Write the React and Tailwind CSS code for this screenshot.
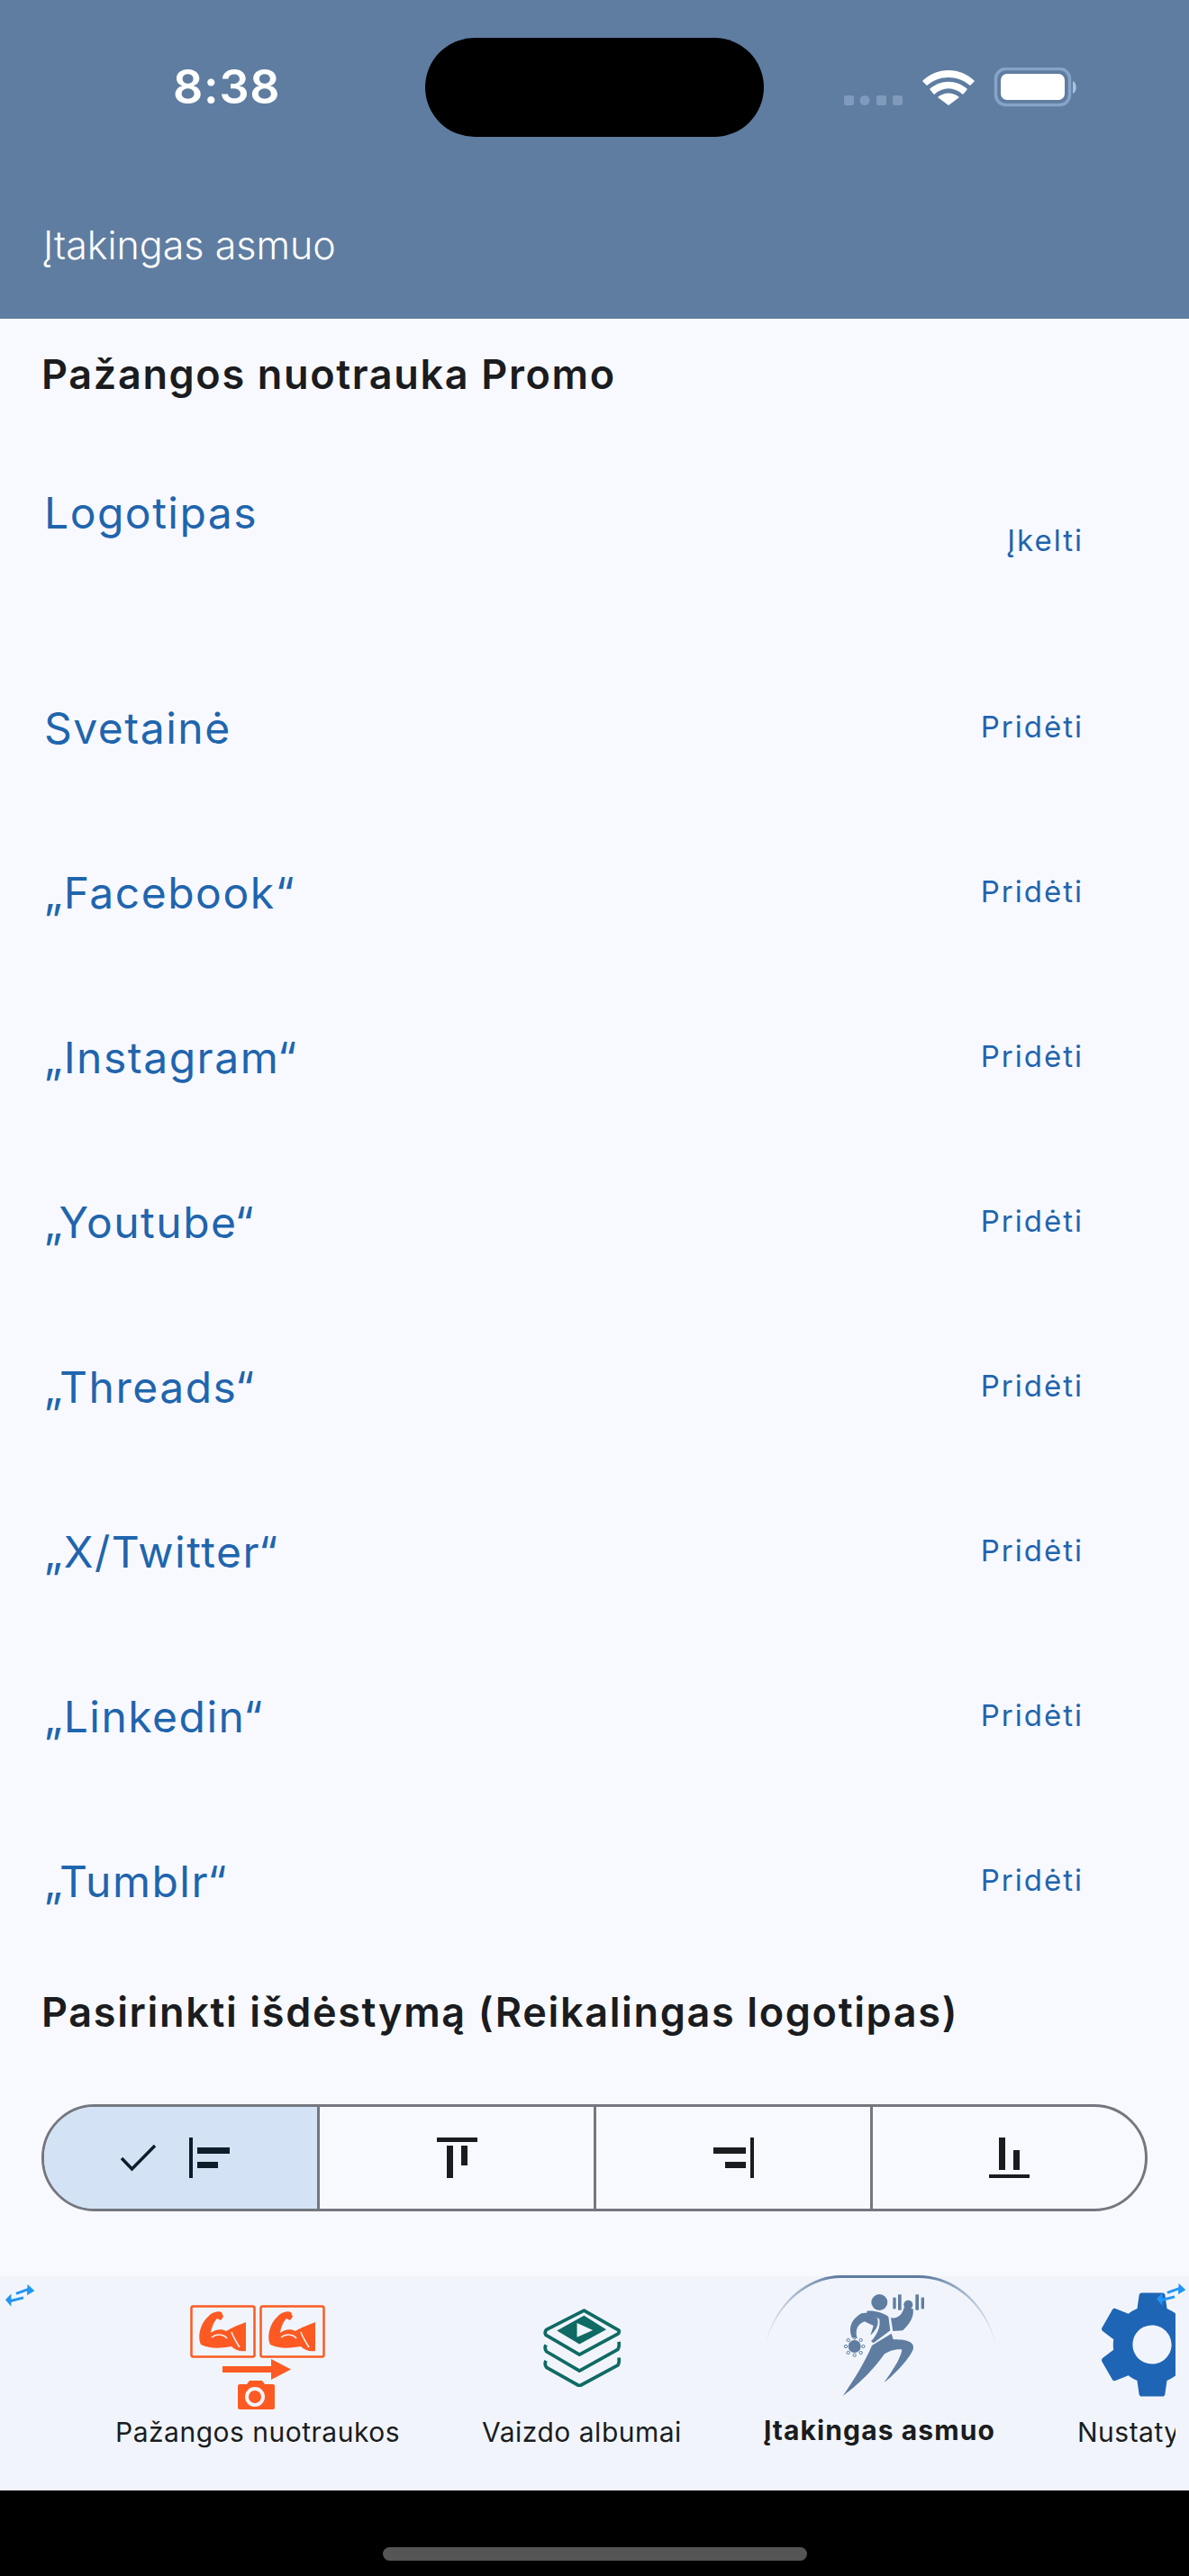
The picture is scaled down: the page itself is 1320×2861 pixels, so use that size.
const links = ["Svetainė", "„Facebook“", "„Instagram“", "„Youtube“", "„Threads“", "„X/Twitter“", "„Linkedin“", "„Tumblr“"];

function StatusIcons() {
  return (
    <svg width="262" height="44" viewBox="0 0 262 44" className="block">
      <g fill="#7f9abb">
        <rect x="0" y="31" width="11" height="11" rx="2" />
        <circle cx="23" cy="36.5" r="5.5" />
        <rect x="36" y="31" width="11" height="11" rx="2" />
        <rect x="54" y="31" width="11" height="11" rx="3" />
      </g>
      <path d="M87 15 C103 -1 129 -1 145 15 L140 20 C126 8 106 8 92 20 Z" fill="#fff" />
      <path d="M95 24 C107 13 125 13 137 24 L132 30 C122 21 110 21 100 30 Z" fill="#fff" />
      <path d="M104 33 C111 27 121 27 128 33 L116 42 Z" fill="#fff" />
      <rect x="168.5" y="1.5" width="82" height="40" rx="11" fill="none" stroke="#86a3c8" strokeWidth="3.5" />
      <rect x="174" y="7" width="71" height="29" rx="7" fill="#fff" />
      <path d="M254 15 C259 17 259 27 254 29 Z" fill="#a9c1de" />
    </svg>
  );
}

function Swap() {
  return (
    <svg width="34" height="26" viewBox="15 105 105 80" className="block">
      <path d="M55 140 L100 124" stroke="#2196f3" strokeWidth="9" fill="none" />
      <path d="M94 108 L118 130 L92 146 Z" fill="#2196f3" />
      <path d="M80 154 L36 165" stroke="#2196f3" strokeWidth="9" fill="none" />
      <path d="M38 140 L18 161 L38 184 Z" fill="#2196f3" />
    </svg>
  );
}

function Flex({ x }) {
  return (
    <g transform={`translate(${x} 0)`}>
      <rect x="1.5" y="1.5" width="70" height="56" rx="2" fill="none" stroke="#fc5a22" strokeWidth="2.5" />
      <path d="M12 44 C8 36 11 21 20 13 C24 8 31 6 35 8 L37 13 L34 17 L30 15 C27 18 24 24 23 31 C28 27 35 26 40 29 C46 25 55 22 62 19 L62 51 C55 52 50 50 46 46 C38 47 24 50 12 44 Z" fill="#fc5a22" />
      <path d="M24 36 C30 31 38 33 41 37 M46 30 C48 36 52 42 55 47" stroke="#f1f5fb" strokeWidth="1.5" fill="none" />
    </g>
  );
}

function ProgressIcon() {
  return (
    <svg width="150" height="118" viewBox="0 0 150 118" className="block">
      <Flex x={0} />
      <Flex x={77} />
      <rect x="36" y="68" width="56" height="7" fill="#fc5a22" />
      <path d="M90 60 L112 71.5 L90 83 Z" fill="#fc5a22" />
      <path d="M53 90 Q53 88 55 88 H63 L66 84 H80 L83 88 H92 Q94 88 94 90 V114 Q94 116 92 116 H55 Q53 116 53 114 Z" fill="#fc5a22" />
      <circle cx="72" cy="102" r="9" fill="#fc5a22" stroke="#f1f5fb" strokeWidth="4" />
    </svg>
  );
}

function AlbumIcon() {
  return (
    <svg width="88" height="88" viewBox="310 188 260 260" className="block">
      <g fill="none" stroke="#0f6a64" strokeWidth="11" strokeLinejoin="round">
        <path d="M447 197 L561 262 Q564 268 558 274 L432 342 L322 278 Q316 268 324 260 Z" />
        <path d="M322 310 Q316 322 324 332 L432 395 L558 325 Q564 315 561 300" />
        <path d="M322 362 Q316 374 324 384 L432 445 L558 377 Q564 367 561 352" />
      </g>
      <path d="M447 214 L520 260 L432 308 L358 263 Z" fill="#0f6a64" />
      <path d="M424 238 L476 262 L424 285 Z" fill="#f1f5fb" />
    </svg>
  );
}

function RunnerIcon() {
  return (
    <svg width="257" height="135" viewBox="85 75 771 405" className="block">
      <defs>
        <linearGradient id="arc" x1="0" x2="1" y1="0" y2="0">
          <stop offset="0" stopColor="#5f7da1" stopOpacity="0.1" />
          <stop offset="0.3" stopColor="#5f7da1" />
          <stop offset="0.7" stopColor="#5f7da1" />
          <stop offset="1" stopColor="#5f7da1" stopOpacity="0.1" />
        </linearGradient>
      </defs>
      <path d="M88 318 C120 160 240 78 340 78 H600 C720 78 830 170 860 318 C825 180 720 87 600 87 H340 C240 87 125 170 88 318 Z" fill="url(#arc)" />
      <g fill="#5f7da1">
        <circle cx="470" cy="168" r="27" />
        <rect x="515" y="152" width="10" height="38" />
        <rect x="532" y="142" width="11" height="52" />
        <rect x="590" y="142" width="11" height="52" />
        <rect x="609" y="152" width="10" height="38" />
        <circle cx="566" cy="176" r="15" />
        <path d="M552 185 L582 190 C586 218 570 240 548 262 L515 264 L508 220 C525 222 545 215 552 185 Z" />
        <path d="M428 197 C455 195 482 203 500 216 L506 262 L450 304 L442 298 C462 276 474 252 470 224 C455 214 442 208 428 212 Z" />
        <path d="M410 205 C380 222 364 250 378 285 L396 288 C388 262 396 242 420 232 L450 246 L440 278 C462 258 470 238 462 218 C445 206 428 200 410 205 Z" />
        <circle cx="387" cy="315" r="21" />
        <path d="M445 312 L510 272 L516 292 C550 292 586 295 583 322 C574 352 520 410 485 436 C510 400 540 358 545 326 C530 322 500 330 485 342 C452 392 390 450 348 480 C382 430 420 372 445 312 Z" />
      </g>
      <g fill="none" stroke="#5f7da1" strokeWidth="3">
        <circle cx="387" cy="286" r="5" />
        <circle cx="387" cy="344" r="5" />
        <circle cx="358" cy="315" r="5" />
        <circle cx="416" cy="315" r="5" />
        <circle cx="366" cy="294" r="5" />
        <circle cx="408" cy="294" r="5" />
        <circle cx="366" cy="336" r="5" />
        <circle cx="408" cy="336" r="5" />
      </g>
    </svg>
  );
}

function GearIcon() {
  return (
    <svg width="144" height="144" viewBox="0 0 24 24" className="block" fill="#1f65b5">
      <path d="M19.14 12.94c.04-.3.06-.61.06-.94 0-.32-.02-.64-.07-.94l2.03-1.58c.18-.14.23-.41.12-.61l-1.92-3.32c-.12-.22-.37-.29-.59-.22l-2.39.96c-.5-.38-1.03-.7-1.62-.94l-.36-2.54c-.04-.24-.24-.41-.48-.41h-3.84c-.24 0-.43.17-.47.41l-.36 2.54c-.59.24-1.13.57-1.62.94l-2.39-.96c-.22-.08-.47 0-.59.22L2.74 8.87c-.12.21-.08.47.12.61l2.03 1.58c-.05.3-.09.63-.09.94s.02.64.07.94l-2.03 1.58c-.18.14-.23.41-.12.61l1.92 3.32c.12.22.37.29.59.22l2.39-.96c.5.38 1.03.7 1.62.94l.36 2.54c.05.24.24.41.48.41h3.84c.24 0 .44-.17.47-.41l.36-2.54c.59-.24 1.13-.56 1.62-.94l2.39.96c.22.08.47 0 .59-.22l1.92-3.32c.12-.22.07-.47-.12-.61l-2.01-1.58zM12 15.6c-1.98 0-3.6-1.62-3.6-3.6s1.62-3.6 3.6-3.6 3.6 1.62 3.6 3.6-1.62 3.6-3.6 3.6z" />
    </svg>
  );
}

function NavItem({ icon, iconClass, label, active }) {
  return (
    <div className="flex flex-col items-center shrink-0">
      <div className={`h-[154px] flex items-start justify-center ${iconClass}`}>{icon}</div>
      <span className={`mt-[1px] text-[30px] leading-[36px] whitespace-nowrap text-[#1a1c20] ${active ? "font-bold tracking-[1.1px]" : "tracking-[0.5px]"}`}>
        {label}
      </span>
    </div>
  );
}

function Seg({ children, selected, last }) {
  return (
    <div className={`flex items-center justify-center gap-[36px] ${selected ? "bg-[#d3e3f5] pr-[12px]" : ""} ${last ? "" : "border-r-[3px] border-[#74777f]"}`}>
      {children}
    </div>
  );
}

export default function App() {
  return (
    <div className="w-[1320px] h-[2861px] flex flex-col overflow-hidden bg-[#f8f9ff] font-['Inter',sans-serif]">
      <header className="relative h-[354px] shrink-0 bg-[#5f7da1] text-white">
        <div className="absolute left-[192px] top-[72px] text-[52px] leading-[50px] font-semibold tracking-[0.8px]">8:38</div>
        <div className="absolute left-[472px] top-[42px] w-[376px] h-[110px] rounded-full bg-black" />
        <div className="absolute left-[937px] top-[75px]"><StatusIcons /></div>
        <div className="absolute left-[48px] top-[244px] text-[43px] leading-[56px] font-light">Įtakingas asmuo</div>
      </header>

      <main className="flex-1">
        <h2 className="h-[124px] pl-[46px] flex items-center text-[45px] font-semibold text-[#1a1c20] tracking-[1.65px]">Pažangos nuotrauka Promo</h2>

        <div className="h-[239px] pl-[49px] pr-[117px] flex justify-between items-start text-[#1f65ae]">
          <span className="mt-[64px] text-[48px] leading-[56px] tracking-[1.5px]">Logotipas</span>
          <span className="mt-[102px] text-[33px] leading-[40px] tracking-[2px]">Įkelti</span>
        </div>

        {links.map((name) => (
          <div key={name} className="h-[183px] pl-[49px] pr-[117px] flex justify-between items-center text-[#1f65ae]">
            <span className="text-[48px] leading-[56px] tracking-[1.5px]">{name}</span>
            <span className="-mt-[3px] text-[33px] leading-[40px] tracking-[2px]">Pridėti</span>
          </div>
        ))}

        <h2 className="h-[108px] pl-[46px] flex items-center text-[45px] font-semibold text-[#1a1c20] tracking-[1.65px]">Pasirinkti išdėstymą (Reikalingas logotipas)</h2>

        <div className="mt-[48px] mx-[46px] h-[119px] grid grid-cols-[306px_307px_307px_1fr] rounded-full border-[3px] border-[#74777f] overflow-hidden">
          <Seg selected>
            <svg width="40" height="30" viewBox="0 0 40 30" fill="none" stroke="#0e1d2a" strokeWidth="3.5">
              <path d="M1 15 L12.5 27 L38 1" />
            </svg>
            <svg width="45" height="45" viewBox="0 0 45 45" fill="#0e1d2a">
              <rect x="0" y="0" width="4" height="45" />
              <rect x="9" y="11" width="36" height="7" />
              <rect x="9" y="27" width="23" height="7" />
            </svg>
          </Seg>
          <Seg>
            <svg width="45" height="45" viewBox="0 0 45 45" fill="#1a1c20">
              <rect x="0" y="0" width="45" height="5" />
              <rect x="11" y="9" width="7" height="36" />
              <rect x="27" y="9" width="7" height="22" />
            </svg>
          </Seg>
          <Seg>
            <svg width="45" height="45" viewBox="0 0 45 45" fill="#1a1c20">
              <rect x="41" y="0" width="4" height="45" />
              <rect x="0" y="11" width="36" height="7" />
              <rect x="13" y="27" width="23" height="7" />
            </svg>
          </Seg>
          <Seg last>
            <svg width="45" height="45" viewBox="0 0 45 45" fill="#1a1c20">
              <rect x="0" y="41" width="45" height="4" />
              <rect x="11" y="0" width="7" height="36" />
              <rect x="27" y="14" width="7" height="22" />
            </svg>
          </Seg>
        </div>
      </main>

      <nav className="relative h-[238px] shrink-0 bg-[#f1f5fb]">
        <div className="w-[1305px] h-[242px] -mt-[4px] pt-[4px] overflow-hidden pl-[128px] flex gap-[91px]">
          <NavItem icon={<ProgressIcon />} iconClass="pt-[32px]" label="Pažangos nuotraukos" />
          <NavItem icon={<AlbumIcon />} iconClass="pt-[35px]" label="Vaizdo albumai" />
          <NavItem icon={<RunnerIcon />} iconClass="-mt-[2px]" label="Įtakingas asmuo" active />
          <NavItem icon={<GearIcon />} iconClass="pt-[4px]" label="Nustatymai" />
        </div>
        <div className="absolute left-[5px] top-[8px]"><Swap /></div>
        <div className="absolute left-[1283px] top-[7px]"><Swap /></div>
      </nav>

      <div className="h-[95px] shrink-0 bg-black flex justify-center pt-[63px]">
        <div className="w-[471px] h-[15px] rounded-full bg-[#555]" />
      </div>
    </div>
  );
}
